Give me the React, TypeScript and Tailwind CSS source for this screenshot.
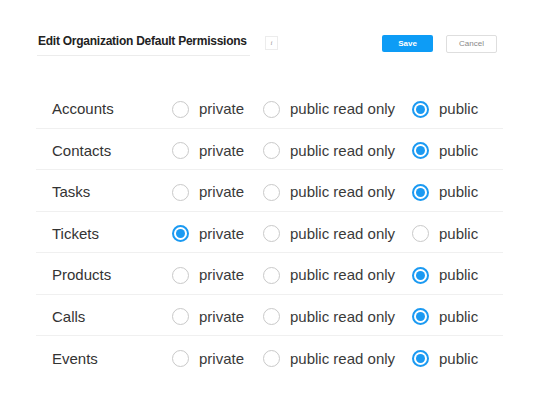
import { useState } from 'react';

type Level = 'private' | 'readonly' | 'public';

const ROWS: { name: string; level: Level }[] = [
  { name: 'Accounts', level: 'public' },
  { name: 'Contacts', level: 'public' },
  { name: 'Tasks', level: 'public' },
  { name: 'Tickets', level: 'private' },
  { name: 'Products', level: 'public' },
  { name: 'Calls', level: 'public' },
  { name: 'Events', level: 'public' },
];

const OPTIONS: { value: Level; label: string }[] = [
  { value: 'private', label: 'private' },
  { value: 'readonly', label: 'public read only' },
  { value: 'public', label: 'public' },
];

function Radio({ checked }: { checked: boolean }) {
  return checked ? (
    <span className="flex h-[17px] w-[17px] shrink-0 items-center justify-center rounded-full border-2 border-[#1b9af2] bg-white">
      <span className="h-[9px] w-[9px] rounded-full bg-[#1b9af2]" />
    </span>
  ) : (
    <span className="h-[17px] w-[17px] shrink-0 rounded-full border border-[#c9c9c9] bg-white" />
  );
}

export default function App() {
  const [perms, setPerms] = useState(() => ROWS.map(r => r.level));

  function choose(i: number, v: Level) {
    setPerms(p => p.map((x, j) => (j === i ? v : x)));
  }

  return (
    <div className="h-[418px] w-[542px] bg-white font-['Liberation_Sans',Arial,sans-serif] text-[#333]">
      {/* Header */}
      <div className="flex items-start pl-[37px] pr-[45px] pt-[35px]">
        <div className="h-[21px] w-[213px] border-b border-[#ececec]">
          <h1 className="ml-[1px] whitespace-nowrap text-[12px] font-bold leading-[13px] tracking-[-0.25px] text-[#222]">
            Edit Organization Default Permissions
          </h1>
        </div>
        <span className="ml-[15px] mt-[1px] flex h-[14px] w-[13px] items-center justify-center border border-[#ececec] font-['Liberation_Serif',serif] text-[7px] italic text-[#999]">
          i
        </span>
        <button className="ml-auto h-[17px] w-[51px] rounded-[2px] bg-[#0d9cf6] text-[8px] font-bold text-white">
          Save
        </button>
        <button className="ml-[13px] h-[18px] w-[51px] rounded-[2px] border border-[#dedede] bg-white text-[8px] text-[#888]">
          Cancel
        </button>
      </div>

      {/* Rows */}
      <div className="ml-[36px] mt-[31px] w-[467px] divide-y divide-[#f0f0f0]">
        {ROWS.map((row, i) => (
          <div key={row.name} className="grid h-[41.5px] grid-cols-[136px_91px_149px_1fr] items-center pt-[4px] text-[15px]">
            <span className="pl-[16px] text-[#333]">{row.name}</span>
            {OPTIONS.map(opt => (
              <label
                key={opt.value}
                onClick={() => choose(i, opt.value)}
                className="flex cursor-pointer items-center gap-[10px] text-[#3a3a3a]"
              >
                <Radio checked={perms[i] === opt.value} />
                <span className="whitespace-nowrap">{opt.label}</span>
              </label>
            ))}
          </div>
        ))}
      </div>
    </div>
  );
}
